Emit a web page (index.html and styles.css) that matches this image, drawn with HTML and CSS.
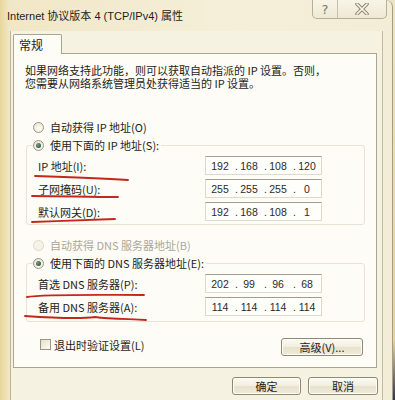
FILE: index.html
```html
<html>

<head>
    <title>Internet 协议版本 4 (TCP/IPv4) 属性</title>
    <link rel="stylesheet" href="styles.css">
</head>

<body>
    <div class="desk">
        <div class="frame">
            <div class="titlebar">
                <span class="title">Internet 协议版本 4 (TCP/IPv4) 属性</span>
                <div class="caption-btns">
                    <span class="cbtn help">?</span>
                    <span class="cbtn close">
                        <svg width="16" height="12" viewBox="0 0 16 12">
                            <path d="M3 1 L13 11 M13 1 L3 11" stroke="#8d8876" stroke-width="3.6" stroke-linecap="round" fill="none"/>
                            <path d="M3 1 L13 11 M13 1 L3 11" stroke="#faf7ec" stroke-width="1.6" stroke-linecap="round" fill="none"/>
                        </svg>
                    </span>
                </div>
            </div>

            <div class="client">
                <div class="tabs"><span class="tab">常规</span></div>

                <div class="panel">
                    <p class="desc">如果网络支持此功能，则可以获取自动指派的 IP 设置。否则，<br>您需要从网络系统管理员处获得适当的 IP 设置。</p>

                    <div class="opt first"><span class="radio"></span>自动获得 IP 地址(O)</div>

                    <fieldset class="group">
                        <legend class="opt"><span class="radio on"></span>使用下面的 IP 地址(S):</legend>
                        <div class="row">
                            <span class="lbl">IP 地址(I):</span>
                            <div class="ip"><span>192</span><i>.</i><span>168</span><i>.</i><span>108</span><i>.</i><span>120</span></div>
                        </div>
                        <div class="row">
                            <span class="lbl">子网掩码(U):</span>
                            <div class="ip"><span>255</span><i>.</i><span>255</span><i>.</i><span>255</span><i>.</i><span>0</span></div>
                        </div>
                        <div class="row">
                            <span class="lbl">默认网关(D):</span>
                            <div class="ip"><span>192</span><i>.</i><span>168</span><i>.</i><span>108</span><i>.</i><span>1</span></div>
                        </div>
                    </fieldset>

                    <div class="opt dns-auto off"><span class="radio"></span>自动获得 DNS 服务器地址(B)</div>

                    <fieldset class="group dns">
                        <legend class="opt"><span class="radio on"></span>使用下面的 DNS 服务器地址(E):</legend>
                        <div class="row">
                            <span class="lbl">首选 DNS 服务器(P):</span>
                            <div class="ip"><span>202</span><i>.</i><span>99</span><i>.</i><span>96</span><i>.</i><span>68</span></div>
                        </div>
                        <div class="row">
                            <span class="lbl">备用 DNS 服务器(A):</span>
                            <div class="ip"><span>114</span><i>.</i><span>114</span><i>.</i><span>114</span><i>.</i><span>114</span></div>
                        </div>
                    </fieldset>

                    <div class="bottom">
                        <span class="check"></span>
                        <span class="check-text">退出时验证设置(L)</span>
                        <button class="btn adv">高级(V)...</button>
                    </div>
                </div>

                <div class="actions">
                    <button class="btn ok">确定</button>
                    <button class="btn cancel">取消</button>
                </div>
            </div>
        </div>

        <!-- red pen marks on the photo -->
        <svg class="marks" width="395" height="400" viewBox="0 0 395 400">
            <g stroke="#c4281d" stroke-width="1.8" fill="none" stroke-linecap="round">
                <path d="M35 176 C 70 177, 100 178, 128 180"/>
                <path d="M32 196 C 60 196, 90 197, 118 197"/>
                <path d="M32 222 C 60 221, 90 220, 115 219"/>
                <path d="M27 297 C 45 294, 100 295, 144 295"/>
                <path d="M25 316 C 55 318, 80 319, 95 317 C 110 319, 130 319, 146 320"/>
            </g>
        </svg>
    </div>
</body>

</html>
```

FILE: styles.css
```css
* {
    box-sizing: border-box;
}

body {
    margin: 0;
    width: 395px;
    height: 400px;
    overflow: hidden;
    font-family: "Noto Sans CJK SC", sans-serif;
    font-size: 11px;
    color: #1e1d19;
}

.desk {
    position: relative;
    width: 395px;
    height: 400px;
    background: linear-gradient(#efe4c0, #e2d3a2 85%, #34344a);
}

.frame {
    width: 393px;
    height: 400px;
    background: linear-gradient(90deg, #e9d69a 0, #f1e7c6 9px, #f5efda 60%, #f3edd8);
    border-right: 1px solid #a49e87;
    border-radius: 0 7px 0 0;
}

.titlebar {
    height: 31px;
    display: flex;
    align-items: flex-start;
}

.title {
    font-family: "Liberation Sans", "Noto Sans CJK SC", sans-serif;
    font-size: 11px;
    margin: 7px 0 0 7px;
}

.caption-btns {
    margin-left: auto;
    margin-right: 5px;
    display: flex;
    height: 19px;
    border: 1px solid #b5af97;
    border-top: none;
    border-radius: 0 0 5px 5px;
    background: linear-gradient(#f8f5e7, #efe9d3);
}

.cbtn {
    display: flex;
    align-items: center;
    justify-content: center;
}

.help {
    width: 25px;
    border-right: 1px solid #c6c0a8;
    color: #7d7867;
    font-family: "DejaVu Sans", sans-serif;
    font-size: 13px;
}

.close {
    width: 48px;
}

.client {
    margin-left: 10px;
    width: 373px;
    height: 369px;
    border-left: 1px solid #bcb495;
    border-right: 1px solid #c2bb9f;
    background: #f6f2e2;
    padding: 3px 0 0 2px;
}

.tabs {
    height: 20px;
}

.tab {
    position: relative;
    z-index: 1;
    display: inline-block;
    width: 49px;
    height: 20px;
    border: 1px solid #aaa58f;
    border-bottom: none;
    border-radius: 2px 2px 0 0;
    background: #fdfcf6;
    font-size: 12px;
    line-height: 19px;
    padding-left: 5px;
}

.panel {
    width: 364px;
    height: 315px;
    margin-top: -1px;
    border: 1px solid #aaa58f;
    background: #fdfcf6;
}

.desc {
    margin: 10px 0 0 11px;
    line-height: 13px;
}

.opt {
    display: flex;
    align-items: center;
    height: 16px;
}

.opt.first {
    margin: 29px 0 0 19px;
}

.opt.dns-auto {
    margin: 12px 0 0 19px;
}

.opt.off {
    color: #aaa797;
}

.radio {
    width: 11px;
    height: 11px;
    margin-right: 6px;
    border: 1px solid #9a9684;
    border-radius: 50%;
    background: radial-gradient(circle at 60% 60%, #fffef8, #e5dfc6);
    display: flex;
    align-items: center;
    justify-content: center;
}

.radio.on::after {
    content: "";
    width: 5px;
    height: 5px;
    border-radius: 50%;
    background: radial-gradient(circle at 35% 35%, #6f9d8a, #1d3f36);
}

.off .radio {
    border-color: #dcd8c8;
    background: #f6f3e8;
}

.group {
    width: 339px;
    min-width: 0;
    margin: 2px 0 0 12px;
    padding: 0 0 1px 0;
    border: 1px solid #e8e4d4;
    border-radius: 3px;
}

.group.dns {
    padding-bottom: 3px;
}

.group legend {
    margin-left: 6px;
    padding: 0 2px 0 0;
}

.row {
    display: flex;
    align-items: center;
    height: 23px;
    padding-left: 11px;
}

.row:first-of-type {
    margin-top: 1px;
}

.lbl {
    width: 167px;
}

.ip {
    display: flex;
    align-items: center;
    width: 117px;
    height: 19px;
    padding-left: 4px;
    border: 1px solid #dedacb;
    border-top-color: #a19e90;
    background: #fefefb;
    font-family: "Liberation Sans", sans-serif;
    font-size: 10.5px;
    color: #2a2a2a;
}

.ip span {
    width: 20px;
    text-align: center;
}

.ip i {
    width: 9px;
    font-style: normal;
    text-align: right;
    padding-right: 1px;
}

.bottom {
    display: flex;
    align-items: center;
    height: 19px;
    margin: 15px 13px 0 26px;
}

.check {
    width: 11px;
    height: 11px;
    margin: -4px 3px 0 0;
    border: 1px solid #9a9684;
    background: linear-gradient(135deg, #e6e0c8, #fdfcf4);
}

.check-text {
    margin-top: -4px;
}

.btn {
    height: 18px;
    padding: 0;
    border: 1px solid #8f8974;
    border-radius: 3px;
    background: linear-gradient(#fcfbf4, #f2eedf 50%, #e7e2cd 51%, #efebd9);
    box-shadow: inset 0 0 0 1px #fffdf4;
    font-family: "Noto Sans CJK SC", sans-serif;
    font-size: 11px;
    color: #1e1d19;
}

.adv {
    width: 82px;
    margin-left: auto;
}

.actions {
    display: flex;
    justify-content: flex-end;
    gap: 7px;
    margin-top: 9px;
    padding-right: 4px;
}

.ok {
    width: 69px;
}

.cancel {
    width: 70px;
}

.marks {
    position: absolute;
    top: 0;
    left: 0;
    pointer-events: none;
}
```
